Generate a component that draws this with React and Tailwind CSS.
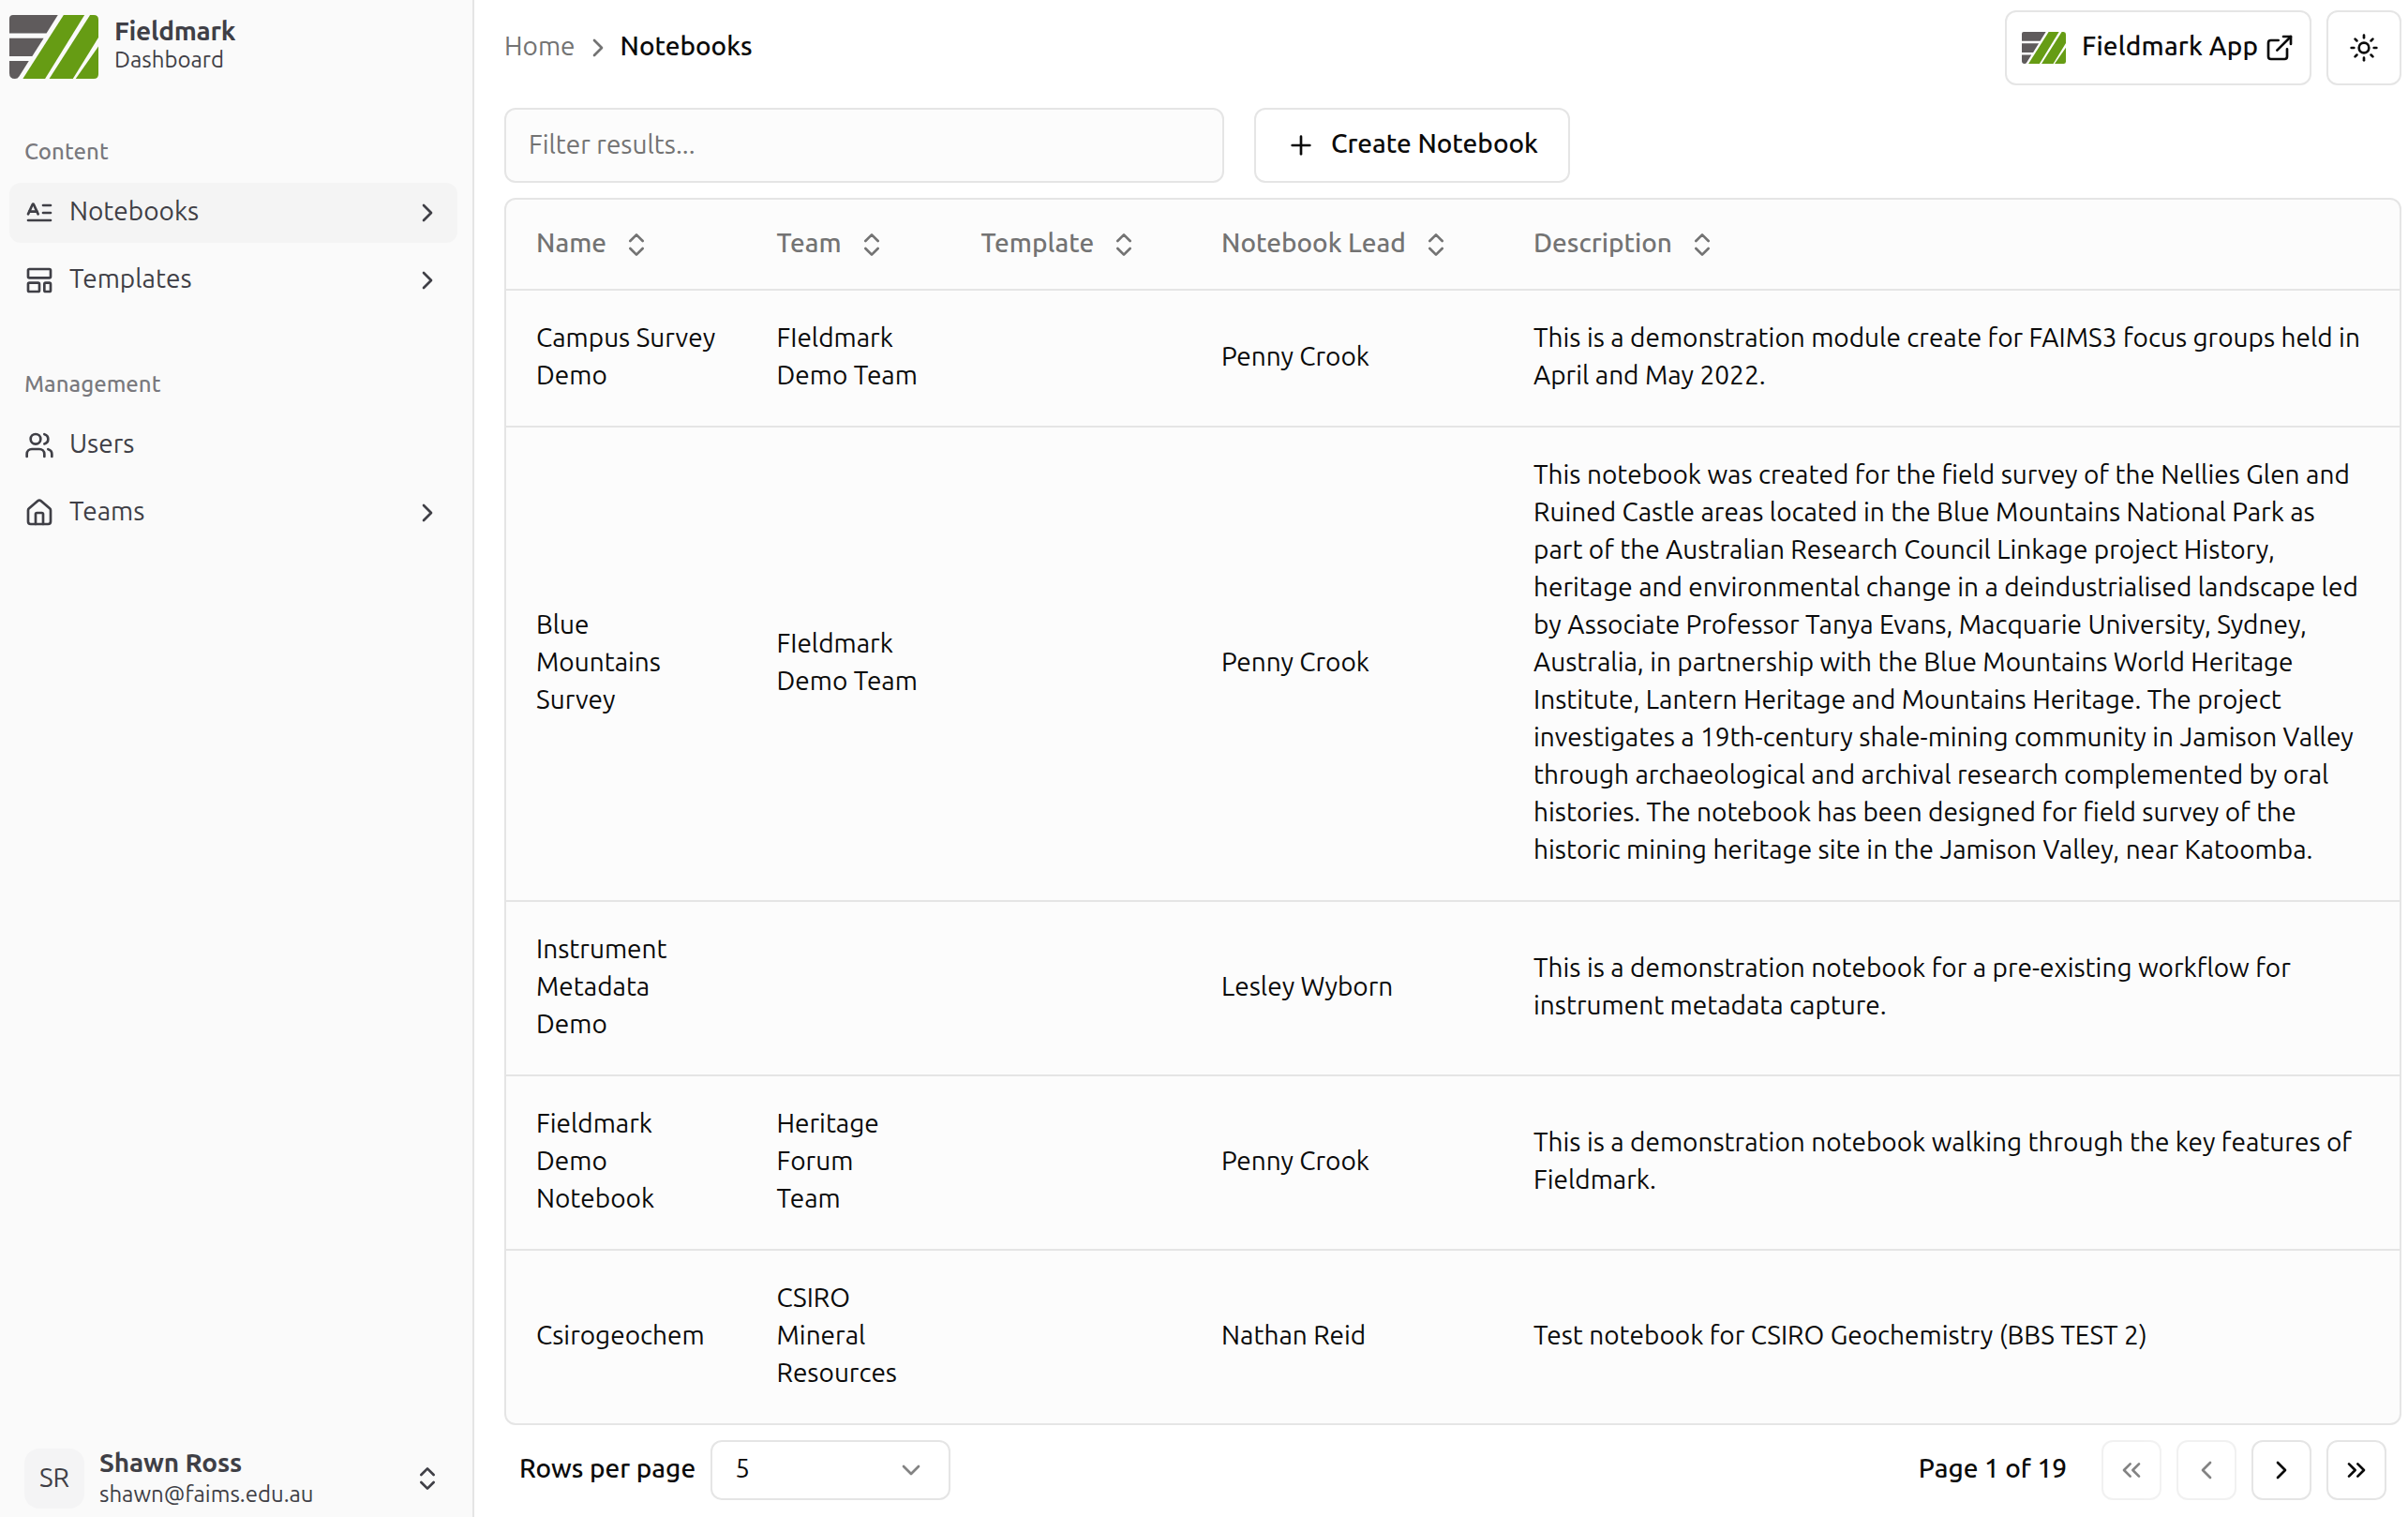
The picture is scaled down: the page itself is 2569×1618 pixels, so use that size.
import {
  ChevronDown,
  ChevronLeft,
  ChevronRight,
  ChevronsLeft,
  ChevronsRight,
  ChevronsUpDown,
  ExternalLink,
  LayoutTemplate,
  Plus,
  Sun,
  Users,
} from 'lucide-react';

function Logo({ className }) {
  return (
    <svg viewBox="0 0 96 68" preserveAspectRatio="none" className={className} aria-hidden="true">
      <g fill="#5f5b5c">
        <path d="M4 0H52.300L40 19.500H0V4Q0 0 4 0Z" />
        <path d="M0 24.700H37L24.600 44H0Z" />
        <path d="M0 49H21L10.500 65.500Q9 68 6 68Q0 68 0 62Z" />
      </g>
      <g fill="#669c14">
        <path d="M58.500 0H81L38.500 68H14.500Z" />
        <path d="M87 0H91Q96 0 96 5V24L68.500 68H43Z" />
        <path d="M96 33.500V63Q96 68 91 68H71.500Z" />
      </g>
    </svg>
  );
}

function LetterText({ className }) {
  return (
    <svg
      viewBox="0 0 24 24"
      fill="none"
      stroke="currentColor"
      strokeWidth="2"
      strokeLinecap="round"
      strokeLinejoin="round"
      className={className}
      aria-hidden="true"
    >
      <path d="M15 12h6" />
      <path d="M15 6h6" />
      <path d="m3 13 3.553-7.724a.5.5 0 0 1 .894 0L11 13" />
      <path d="M3 18h18" />
      <path d="M4 11h6" />
    </svg>
  );
}

function House({ className }) {
  return (
    <svg
      viewBox="0 0 24 24"
      fill="none"
      stroke="currentColor"
      strokeWidth="2"
      strokeLinecap="round"
      strokeLinejoin="round"
      className={className}
      aria-hidden="true"
    >
      <path d="M15 21v-8a1 1 0 0 0-1-1h-4a1 1 0 0 0-1 1v8" />
      <path d="M3 10a2 2 0 0 1 .709-1.528l7-5.999a2 2 0 0 1 2.582 0l7 5.999A2 2 0 0 1 21 10v9a2 2 0 0 1-2 2H5a2 2 0 0 1-2-2z" />
    </svg>
  );
}

const groups = [
  {
    label: 'Content',
    items: [
      { label: 'Notebooks', Icon: LetterText, active: true, expandable: true },
      { label: 'Templates', Icon: LayoutTemplate, expandable: true },
    ],
  },
  {
    label: 'Management',
    items: [
      { label: 'Users', Icon: Users },
      { label: 'Teams', Icon: House, expandable: true },
    ],
  },
];

const columns = ['Name', 'Team', 'Template', 'Notebook Lead', 'Description'];

const rows = [
  {
    name: 'Campus Survey Demo',
    team: 'FIeldmark Demo Team',
    lead: 'Penny Crook',
    description:
      'This is a demonstration module create for FAIMS3 focus groups held in April and May 2022.',
  },
  {
    name: 'Blue Mountains Survey',
    team: 'FIeldmark Demo Team',
    lead: 'Penny Crook',
    description:
      'This notebook was created for the field survey of the Nellies Glen and Ruined Castle areas located in the Blue Mountains National Park as part of the Australian Research Council Linkage project History, heritage and environmental change in a deindustrialised landscape led by Associate Professor Tanya Evans, Macquarie University, Sydney, Australia, in partnership with the Blue Mountains World Heritage Institute, Lantern Heritage and Mountains Heritage. The project investigates a 19th-century shale-mining community in Jamison Valley through archaeological and archival research complemented by oral histories. The notebook has been designed for field survey of the historic mining heritage site in the Jamison Valley, near Katoomba.',
  },
  {
    name: 'Instrument Metadata Demo',
    team: '',
    lead: 'Lesley Wyborn',
    description:
      'This is a demonstration notebook for a pre-existing workflow for instrument metadata capture.',
  },
  {
    name: 'Fieldmark Demo Notebook',
    team: 'Heritage Forum Team',
    lead: 'Penny Crook',
    description:
      'This is a demonstration notebook walking through the key features of Fieldmark.',
  },
  {
    name: 'Csirogeochem',
    team: 'CSIRO Mineral Resources',
    lead: 'Nathan Reid',
    description: 'Test notebook for CSIRO Geochemistry (BBS TEST 2)',
  },
];

const pager = [
  { label: 'First page', Icon: ChevronsLeft, disabled: true },
  { label: 'Previous page', Icon: ChevronLeft, disabled: true },
  { label: 'Next page', Icon: ChevronRight },
  { label: 'Last page', Icon: ChevronsRight },
];

function Sidebar() {
  return (
    <aside className="flex w-[506px] shrink-0 flex-col border-r-2 border-[#e5e5e5] bg-[#fafafa] text-[#3f3f46]">
      <div className="flex items-start gap-[17px] pt-[15px] pl-2.5">
        <Logo className="mt-px h-[68px] w-[95px]" />
        <div className="flex flex-col">
          <span className="text-[28px] leading-[35px] font-semibold tracking-[-0.25px]">
            Fieldmark
          </span>
          <span className="text-[24px] leading-[28px]">Dashboard</span>
        </div>
      </div>
      <nav className="mt-[47px] flex flex-col gap-12 px-2.5 pr-4">
        {groups.map((group) => (
          <section key={group.label}>
            <h2 className="flex h-16 items-center px-4 pb-0.5 text-[24px] font-medium text-[#3f3f46]/70">
              {group.label}
            </h2>
            <ul className="flex flex-col gap-2">
              {group.items.map(({ label, Icon, active, expandable }) => (
                <li
                  key={label}
                  className={
                    active
                      ? 'flex h-16 items-center gap-4 rounded-xl bg-[#f4f4f4] px-4'
                      : 'flex h-16 items-center gap-4 rounded-xl px-4'
                  }
                >
                  <Icon className="size-8 shrink-0" />
                  <span className="flex-1 pb-1 text-[28px] leading-10">{label}</span>
                  {expandable && <ChevronRight className="size-8 shrink-0" />}
                </li>
              ))}
            </ul>
          </section>
        ))}
      </nav>
      <div className="mt-auto mb-[9px] flex h-16 items-center gap-4 pr-8 pl-[26px]">
        <div className="flex size-16 items-center justify-center rounded-2xl bg-[#f4f4f5] pb-0.5 text-[28px]">
          SR
        </div>
        <div className="flex flex-1 flex-col pb-[3px]">
          <span className="text-[28px] leading-[35px] font-semibold tracking-[-0.12px]">
            Shawn Ross
          </span>
          <span className="text-[24px] leading-[33px]">shawn@faims.edu.au</span>
        </div>
        <ChevronsUpDown className="size-8" />
      </div>
    </aside>
  );
}

function TopBar() {
  return (
    <header className="mt-[11px] flex h-20 items-center justify-between">
      <div className="flex items-center gap-2 text-[28px] leading-10">
        <span className="pb-1 text-[#737373]">Home</span>
        <ChevronRight className="size-8 text-[#737373]" />
        <span className="pb-1 font-medium">Notebooks</span>
      </div>
      <div className="flex gap-4">
        <button className="flex h-20 w-[327px] items-center rounded-xl border-2 border-[#e5e5e5] px-4 text-[28px] font-medium">
          <Logo className="h-[34px] w-[47px]" />
          <span className="ml-[17px] pb-1 tracking-[0.2px]">Fieldmark App</span>
          <ExternalLink className="ml-auto size-8" />
        </button>
        <button className="flex size-20 items-center justify-center rounded-xl border-2 border-[#e5e5e5]">
          <Sun className="size-8" />
        </button>
      </div>
    </header>
  );
}

function NotebookTable() {
  return (
    <div className="mt-4 rounded-xl border-2 border-[#e5e5e5] bg-[#fcfcfc]">
      <table className="w-full table-fixed border-collapse text-[28px] leading-10">
        <colgroup>
          <col className="w-[256.5px]" />
          <col className="w-[218px]" />
          <col className="w-[256.5px]" />
          <col className="w-[333px]" />
          <col />
        </colgroup>
        <thead>
          <tr className="border-b-2 border-[#e5e5e5]">
            {columns.map((column) => (
              <th key={column} className="h-24 px-8 text-left font-medium text-[#737373]">
                <span className="flex items-center gap-4 whitespace-nowrap">
                  <span className="pb-1">{column}</span>
                  <ChevronsUpDown className="size-8 shrink-0" />
                </span>
              </th>
            ))}
          </tr>
        </thead>
        <tbody>
          {rows.map((row) => (
            <tr key={row.name} className="border-b-2 border-[#e5e5e5] last:border-0">
              <td className="px-8 pt-[30px] pb-[34px]">{row.name}</td>
              <td className="px-8 pt-[30px] pb-[34px]">{row.team}</td>
              <td className="px-8 pt-[30px] pb-[34px]" />
              <td className="px-8 pt-[30px] pb-[34px]">{row.lead}</td>
              <td className="px-8 pt-[30px] pb-[34px]">{row.description}</td>
            </tr>
          ))}
        </tbody>
      </table>
    </div>
  );
}

function Pagination() {
  return (
    <footer className="mt-4 flex h-16 items-center justify-between px-4 text-[28px] leading-10">
      <div className="flex items-center gap-4">
        <span className="pb-1 font-medium">Rows per page</span>
        <div className="flex h-16 w-64 items-center justify-between rounded-xl border-2 border-[#e5e5e5] px-6">
          <span className="pb-1">5</span>
          <ChevronDown className="size-8 opacity-50" />
        </div>
      </div>
      <div className="flex items-center gap-4">
        <span className="pr-[21px] pb-1 font-medium">Page 1 of 19</span>
        {pager.map(({ label, Icon, disabled }) => (
          <button
            key={label}
            aria-label={label}
            disabled={disabled}
            className="flex size-16 items-center justify-center rounded-xl border-2 border-[#e5e5e5] disabled:opacity-50"
          >
            <Icon className="size-8" />
          </button>
        ))}
      </div>
    </footer>
  );
}

export default function App() {
  return (
    <div className="flex h-[1618px] w-full overflow-hidden bg-white font-['Ubuntu','Noto_Sans',sans-serif] text-[#0a0a0a]">
      <Sidebar />
      <main className="flex-1 pr-[7px] pl-8">
        <TopBar />
        <div className="mt-6 flex gap-8">
          <div className="flex h-20 w-[768px] items-center rounded-xl border-2 border-[#e5e5e5] bg-[#fcfcfc] px-6 text-[28px] leading-10 text-[#737373]">
            <span className="pb-0.5">Filter results...</span>
          </div>
          <button className="flex h-20 items-center gap-4 rounded-xl border-2 border-[#e5e5e5] px-8 text-[28px] leading-10 font-medium">
            <Plus className="size-8" />
            <span className="pb-1">Create Notebook</span>
          </button>
        </div>
        <NotebookTable />
        <Pagination />
      </main>
    </div>
  );
}
